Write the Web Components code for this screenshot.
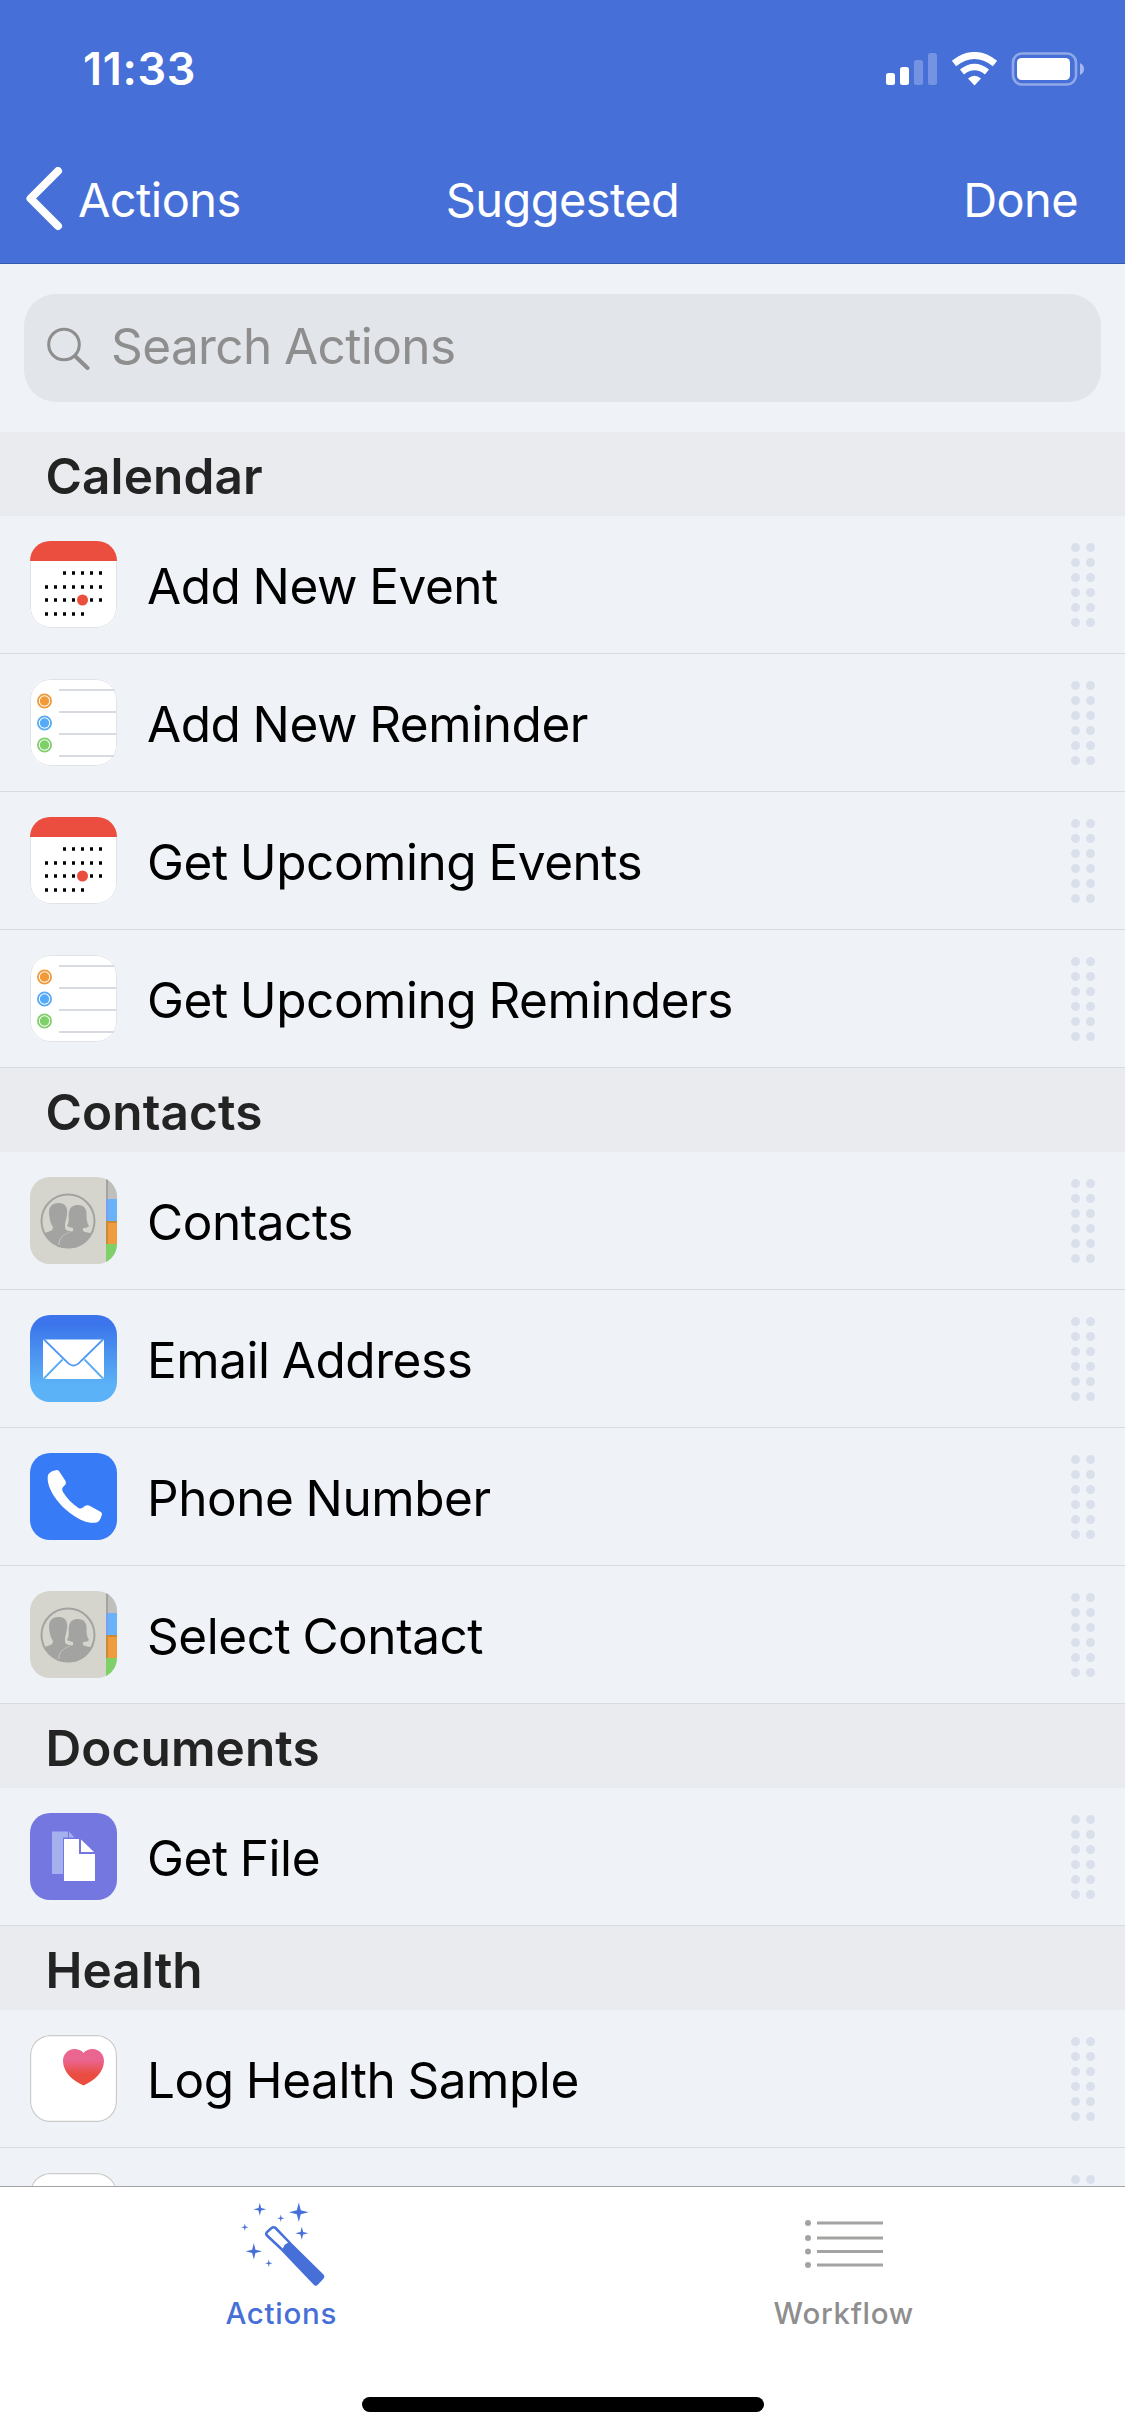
<!DOCTYPE html>
<html lang="en">
<head>
<meta charset="utf-8">
<title>Suggested</title>
<style>
    :root {
        --accent: #466fd8;
        --background: #eff3f8;
        --separator: #d8dbe0;
        --muted: #8e8e8e;
    }

    body {
        margin: 0;
        background: #fff;
        font-family: Inter, "Liberation Sans", sans-serif;
    }
</style>
</head>
<body>
<app-screen>
    <status-bar slot="top">11:33</status-bar>
    <nav-bar slot="top" back="Actions" action="Done">Suggested</nav-bar>
    <search-field>Search Actions</search-field>
    <action-section name="Calendar">
        <action-row icon="calendar">Add New Event</action-row>
        <action-row icon="reminders">Add New Reminder</action-row>
        <action-row icon="calendar">Get Upcoming Events</action-row>
        <action-row icon="reminders">Get Upcoming Reminders</action-row>
    </action-section>
    <action-section name="Contacts">
        <action-row icon="contacts">Contacts</action-row>
        <action-row icon="mail">Email Address</action-row>
        <action-row icon="phone">Phone Number</action-row>
        <action-row icon="contacts">Select Contact</action-row>
    </action-section>
    <action-section name="Documents">
        <action-row icon="file">Get File</action-row>
    </action-section>
    <action-section name="Health">
        <action-row icon="health">Log Health Sample</action-row>
        <action-row icon="health"></action-row>
    </action-section>
    <tab-bar slot="bottom">
        <tab-item icon="wand" active>Actions</tab-item>
        <tab-item icon="list">Workflow</tab-item>
    </tab-bar>
</app-screen>

<script>
    const attach = (element, markup) => {
        const template = document.createElement('template');
        template.innerHTML = markup;
        element.attachShadow({mode: 'open'}).append(template.content.cloneNode(true));
    };

    // four pointed star centred on x, y
    const star = (x, y, r) => {
        const k = r * 0.2;
        return `<path d="M${x} ${y - r}L${x + k} ${y - k}L${x + r} ${y}L${x + k} ${y + k}L${x} ${y + r}L${x - k} ${y + k}L${x - r} ${y}L${x - k} ${y - k}Z"/>`;
    };

    const reminder = (y, color) => `
        <circle cx="14.5" cy="${y}" r="6.6" fill="none" stroke="${color}" stroke-width="1.8"/>
        <circle cx="14.5" cy="${y}" r="4.7" fill="${color}"/>`;

    const appIcons = {
        calendar: `
            <rect width="87" height="87" fill="#fff"/>
            <rect x=".5" y=".5" width="86" height="86" rx="20" fill="none" stroke="#e0e2e8"/>
            <path d="M0 0h87v20H0z" fill="#eb4d3f"/>
            <path d="M33 32h39M15 46h57M15 59h57M15 73h39" stroke="#000" stroke-width="3.4" stroke-dasharray="3 6"/>
            <circle cx="52.5" cy="59" r="5.5" fill="#eb4d3f"/>`,
        reminders: `
            <rect width="87" height="87" fill="#fff"/>
            <path d="M29 11h58M29 33h58M29 55h58M29 77h58" stroke="#d7dbe1" stroke-width="2"/>
            <rect x=".5" y=".5" width="86" height="86" rx="20" fill="none" stroke="#e0e2e8"/>
            ${reminder(22, '#f09a3b')}${reminder(44, '#57aaf5')}${reminder(66, '#7fd069')}`,
        contacts: `
            <rect width="87" height="87" fill="#d5d5ce"/>
            <path d="M76 0h11v22H76z" fill="#bfc0be"/>
            <path d="M76 22h11v22H76z" fill="#69b1f8"/>
            <path d="M76 44h11v23H76z" fill="#f09b3c"/>
            <path d="M76 67h11v20H76z" fill="#7fd069"/>
            <path d="M76 0h2v22h-2z" fill="#a3a3a2"/>
            <path d="M76 22h2v22h-2z" fill="#7f9df0"/>
            <path d="M76 44h11v2H78v21h-2z" fill="#c98a3a"/>
            <path d="M15 56C20 54 23 54 23 50C21 47 20 44 19.5 40C18 32 20 26 29 26C36 26 38 31 37 38L35 47V51C36 54 39 54 42 54C33 57 28 61 28.5 69C23 67 18 62 15 56Z" fill="#a3a3a1"/>
            <path d="M29.5 69.5C28 61 34 57 43 54V51C40 50 38 50 37 49C40 44 38 40 39 35C40 30 43 28 48 28C54 28 57 32 56.5 38C56.5 43 57 46 59 49C57 51 55 51 53 51V54C56 56 59 55 62 57C56 69 43 74 29.5 69.5Z" fill="#a3a3a1"/>
            <circle cx="38" cy="44" r="26.5" fill="none" stroke="#a3a3a1" stroke-width="2"/>`,
        mail: `
            <defs><linearGradient id="sky" x2="0" y2="1">
                <stop offset=".1" stop-color="#3b74eb"/><stop offset=".8" stop-color="#5bb2f6"/>
            </linearGradient></defs>
            <rect width="87" height="87" fill="url(#sky)"/>
            <path d="M13 24.5h61V64H13z" fill="#fff"/>
            <path d="M13.5 24L36 46Q43.5 55 51 46L73.5 24" fill="none" stroke="#4e97f2" stroke-width="1.8"/>
            <path d="M13.5 64L32.5 44.5M73.5 64L54.5 44.5" stroke="#58adf5" stroke-width="1.8"/>`,
        phone: `
            <rect width="87" height="87" fill="#387bf6"/>
            <path d="M18.5 21C21 18 24 17.5 27 17C28.5 17 29 18 30 19.5L35.5 28C36.5 30 35.5 31.5 34.5 32.5C32 34.5 31.5 36.5 33 39C37 45.5 42.5 51 48.5 55C50 56 51.5 55.5 53 54.5C55.5 52.5 57.5 51.5 60 53L70 58.5C72 59.5 72.5 61 71.5 63C70.5 66 69 69 66.5 69.5C59 71 51 67.5 43.5 62.5C33 55.5 24.5 46 20 35.5C17.5 30 17 24 18.5 21Z" fill="#fff"/>`,
        file: `
            <rect width="87" height="87" fill="#7577e0"/>
            <path d="M22 18.5h16v6h-5v36.500H22zM39 18.5l5.5 6H39z" fill="#a3b2ee"/>
            <path d="M34 26h15v15h16v27H34z" fill="#fff"/>
            <path d="M51 26.5L64 39H51z" fill="#fff"/>`,
        health: `
            <defs><linearGradient id="pulse" x2="0" y2="1">
                <stop offset=".3" stop-color="#eb6591"/><stop offset=".7" stop-color="#ea4d3f"/>
            </linearGradient></defs>
            <rect width="87" height="87" fill="#fff"/>
            <rect x=".5" y=".5" width="86" height="86" rx="20" fill="none" stroke="#cbccca" stroke-width="1.4"/>
            <path d="M53.5 18C56 15 59 14 62.5 14C69 14 74 19 74 26C74 37 64 46 53.5 50.5C43 46 33 37 33 26C33 19 38 14 44.5 14C48 14 51 15 53.5 18Z" fill="url(#pulse)"/>`
    };

    const tabIcons = {
        wand: `
            <svg width="90" height="90" viewBox="-4.5 0 90 90" fill="currentColor">
                ${star(19.3, 9.3, 6.5)}${star(58.3, 12.3, 9.8)}${star(40.3, 18.3, 3.8)}${star(4.3, 27.3, 3.8)}
                ${star(61.3, 33.3, 6.5)}${star(13.3, 51.3, 8.2)}${star(28.3, 63.3, 3.8)}
                <path d="M42 50L26.5 35.5Q25 34 26.5 32L31 28Q33.5 26.5 35 28L49.5 43" fill="none" stroke="currentColor" stroke-width="2.5"/>
                <path d="M41 51L44 45Q46 43 50 42L83 74.5Q84.5 76 83.5 78Q80 82 76.5 85.5Q74.5 86.5 73 84.5Z"/>
            </svg>`,
        list: `
            <svg width="90" height="90" viewBox="0 0 90 90" fill="#a3a3a1">
                <circle cx="9" cy="23" r="3"/><path d="M18 21.5h66v3H18z"/>
                <circle cx="9" cy="38" r="3"/><path d="M18 36.5h66v3H18z"/>
                <circle cx="9" cy="51.5" r="3"/><path d="M18 50h66v3H18z"/>
                <circle cx="9" cy="65" r="3"/><path d="M18 63.5h66v3H18z"/>
            </svg>`
    };

    customElements.define('app-screen', class extends HTMLElement {
        connectedCallback() {
            attach(this, `
                <style>
                    :host {
                        display: flex;
                        flex-direction: column;
                        width: 1125px;
                        height: 2436px;
                        overflow: hidden;
                    }

                    main {
                        flex: 1;
                        min-height: 0;
                        overflow: hidden;
                        background: var(--background);
                    }
                </style>
                <slot name="top"></slot>
                <main><slot></slot></main>
                <slot name="bottom"></slot>
            `);
        }
    });

    customElements.define('status-bar', class extends HTMLElement {
        connectedCallback() {
            attach(this, `
                <style>
                    :host {
                        display: flex;
                        justify-content: space-between;
                        align-items: center;
                        box-sizing: border-box;
                        height: 132px;
                        padding: 5px 40px 0 83px;
                        background: var(--accent);
                        color: #fff;
                        font-size: 45px;
                        font-weight: 600;
                        letter-spacing: .7px;
                    }
                </style>
                <span><slot></slot></span>
                <svg width="199" height="34" viewBox="0 0 199 34" fill="#fff">
                    <rect y="21" width="9" height="12" rx="2.5"/>
                    <rect x="14" y="15" width="9" height="18" rx="2.5"/>
                    <rect x="28" y="8" width="9" height="25" rx="2.5" opacity=".25"/>
                    <rect x="42" y="1" width="9" height="32" rx="2.5" opacity=".25"/>
                    <g fill="none" stroke="#fff">
                        <path d="M68 11.5Q88.5 -4.5 109 11.5" stroke-width="7"/>
                        <path d="M76 20Q88.5 10 101 20" stroke-width="6.5"/>
                    </g>
                    <path d="M82 26.5Q88.5 21 95 26.5L88.5 33.5Z"/>
                    <rect x="127" y="1.5" width="63" height="31" rx="9" fill="none" stroke="#fff" stroke-width="2.6" opacity=".4"/>
                    <rect x="131" y="6" width="53" height="22" rx="4.5"/>
                    <path d="M194 11q4 2 4 6t-4 6z" opacity=".5"/>
                </svg>
            `);
        }
    });

    customElements.define('nav-bar', class extends HTMLElement {
        connectedCallback() {
            attach(this, `
                <style>
                    :host {
                        display: grid;
                        grid-template-columns: 1fr auto 1fr;
                        align-items: center;
                        box-sizing: border-box;
                        height: 132px;
                        padding: 2px 25px 0;
                        background: var(--accent);
                        box-shadow: inset 0 -1px #3459ae;
                        color: #fff;
                        font-size: 47px;
                        letter-spacing: -.6px;
                    }

                    .back {
                        display: flex;
                        align-items: center;
                        gap: 15px;
                    }

                    .action {
                        padding-right: 22px;
                        text-align: right;
                    }
                </style>
                <span class="back">
                    <svg width="38" height="64" viewBox="0 0 38 64" fill="none" stroke="#fff" stroke-width="8" stroke-linecap="round" stroke-linejoin="round">
                        <path d="M33 4L5.5 31.5L33 59"/>
                    </svg>
                    <span>${this.getAttribute('back')}</span>
                </span>
                <span><slot></slot></span>
                <span class="action">${this.getAttribute('action')}</span>
            `);
        }
    });

    customElements.define('search-field', class extends HTMLElement {
        connectedCallback() {
            attach(this, `
                <style>
                    :host {
                        display: block;
                        padding: 30px 24px;
                    }

                    .field {
                        display: flex;
                        align-items: center;
                        gap: 21px;
                        height: 108px;
                        padding-left: 23px;
                        border-radius: 32px;
                        background: #e2e5ea;
                        color: var(--muted);
                        font-size: 49.5px;
                        letter-spacing: -.6px;
                        word-spacing: -1px;
                    }

                    .text {
                        padding-bottom: 4px;
                    }
                </style>
                <div class="field">
                    <svg width="43" height="43" viewBox="0 0 43 43" fill="none" stroke="#8e8e8e" stroke-linecap="round">
                        <circle cx="17" cy="17.5" r="15.3" stroke-width="3"/>
                        <path d="M28.5 29.5L40.5 41" stroke-width="4"/>
                    </svg>
                    <span class="text"><slot></slot></span>
                </div>
            `);
        }
    });

    customElements.define('action-section', class extends HTMLElement {
        connectedCallback() {
            attach(this, `
                <style>
                    :host {
                        display: block;
                    }

                    .name {
                        box-sizing: border-box;
                        height: 84px;
                        padding: 4px 45.5px 0;
                        line-height: 81px;
                        background: #eaebef;
                        color: #232323;
                        font-size: 49.5px;
                        font-weight: 600;
                        letter-spacing: .1px;
                    }
                </style>
                <div class="name">${this.getAttribute('name')}</div>
                <slot></slot>
            `);
        }
    });

    customElements.define('action-row', class extends HTMLElement {
        connectedCallback() {
            attach(this, `
                <style>
                    :host {
                        display: flex;
                        align-items: center;
                        box-sizing: border-box;
                        height: 138px;
                        padding: 0 30px;
                        box-shadow: inset 0 -1px var(--separator);
                        color: #000;
                        font-size: 49.5px;
                        letter-spacing: -.45px;
                        word-spacing: -1.3px;
                    }

                    .icon {
                        width: 87px;
                        height: 87px;
                        margin: 0 30px 1px 0;
                        border-radius: 20px;
                    }

                    .label {
                        flex: 1;
                        padding-top: 2px;
                        white-space: nowrap;
                    }

                    .handle {
                        width: 24px;
                        height: 84px;
                    }
                </style>
                <svg class="icon" viewBox="0 0 87 87">${appIcons[this.getAttribute('icon')]}</svg>
                <span class="label"><slot></slot></span>
                <svg class="handle" viewBox="0 0 24 84" fill="none" stroke="#dae0eb" stroke-width="9" stroke-linecap="round" stroke-dasharray="0 15">
                    <path d="M4.5 4.5V80M19.5 4.5V80"/>
                </svg>
            `);
        }
    });

    customElements.define('tab-bar', class extends HTMLElement {
        connectedCallback() {
            attach(this, `
                <style>
                    :host {
                        display: flex;
                        flex-direction: column;
                        align-items: center;
                        justify-content: space-between;
                        box-sizing: border-box;
                        height: 250px;
                        padding-bottom: 24px;
                        border-top: 1px solid #a3a3a3;
                        background: #fff;
                    }

                    .tabs {
                        display: flex;
                        align-self: stretch;
                    }

                    .home {
                        width: 402px;
                        height: 15px;
                        border-radius: 8px;
                        background: #000;
                    }
                </style>
                <div class="tabs"><slot></slot></div>
                <div class="home"></div>
            `);
        }
    });

    customElements.define('tab-item', class extends HTMLElement {
        connectedCallback() {
            attach(this, `
                <style>
                    :host {
                        display: flex;
                        flex: 1;
                        flex-direction: column;
                        align-items: center;
                        padding-top: 13px;
                        color: var(--muted);
                        font-size: 29.5px;
                        font-weight: 450;
                        letter-spacing: .7px;
                    }

                    :host([active]) {
                        color: var(--accent);
                    }

                    span {
                        margin-top: 5px;
                        line-height: 36px;
                    }
                </style>
                ${tabIcons[this.getAttribute('icon')]}
                <span><slot></slot></span>
            `);
        }
    });
</script>
</body>
</html>
